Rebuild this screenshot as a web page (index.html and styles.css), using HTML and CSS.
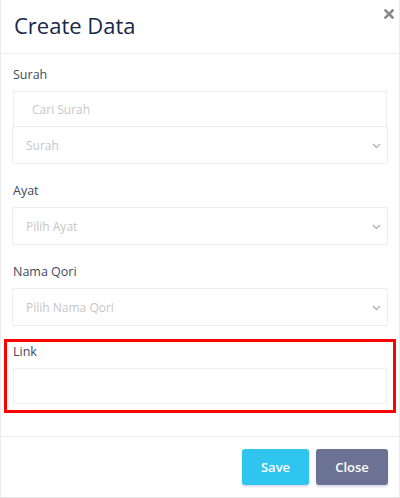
FILE: index.html
```html
<!DOCTYPE html>
<html lang="id">
<head>
<meta charset="utf-8">
<title>Create Data</title>
<link rel="stylesheet" href="styles.css">
</head>
<body>
<div class="modal">
  <div class="modal-header">
    <h5 class="modal-title">Create Data</h5>
    <button class="close" type="button" aria-label="Close">
      <svg width="10" height="10" viewBox="0 0 10 10"><path d="M1.5 1.5 L8.5 8.5 M8.5 1.5 L1.5 8.5" stroke="#8a8a8a" stroke-width="2.6" stroke-linecap="square"/></svg>
    </button>
  </div>
  <div class="modal-body">
    <div class="form-group">
      <label class="label">Surah</label>
      <input class="search" type="text" placeholder="Cari Surah">
      <div class="select"><span>Surah</span><svg class="chev" width="9" height="6" viewBox="0 0 9 6"><path d="M1 1 L4.5 4.5 L8 1" fill="none" stroke="#b5b5b5" stroke-width="1.5"/></svg></div>
    </div>
    <div class="form-group">
      <label class="label">Ayat</label>
      <div class="select"><span>Pilih Ayat</span><svg class="chev" width="9" height="6" viewBox="0 0 9 6"><path d="M1 1 L4.5 4.5 L8 1" fill="none" stroke="#b5b5b5" stroke-width="1.5"/></svg></div>
    </div>
    <div class="form-group">
      <label class="label">Nama Qori</label>
      <div class="select"><span>Pilih Nama Qori</span><svg class="chev" width="9" height="6" viewBox="0 0 9 6"><path d="M1 1 L4.5 4.5 L8 1" fill="none" stroke="#b5b5b5" stroke-width="1.5"/></svg></div>
    </div>
    <div class="highlight">
      <label class="label">Link</label>
      <input class="link" type="text">
    </div>
  </div>
  <div class="modal-footer">
    <button class="btn btn-save" type="button">Save</button>
    <button class="btn btn-close" type="button">Close</button>
  </div>
</div>
</body>
</html>
```
FILE: styles.css
```css
* { box-sizing: border-box; }
html, body { margin: 0; padding: 0; background: #fff; }
body { font-family: "Open Sans", "DejaVu Sans", sans-serif; }

.modal {
  width: 400px;
  height: 498px;
  border-left: 1px solid #ececec;
  border-right: 1px solid #ececec;
  border-bottom: 1px solid #e4e4e4;
  display: flex;
  flex-direction: column;
}

.modal-header {
  height: 54px;
  border-bottom: 1px solid #eceef2;
  display: flex;
  align-items: flex-start;
  justify-content: space-between;
  padding: 0 5px 0 13px;
}
.modal-title {
  margin: 10px 0 0 0;
  font-size: 22px;
  line-height: 30px;
  font-weight: 500;
  color: #172849;
}
.close {
  border: 0;
  background: none;
  padding: 0;
  margin-top: 9px;
  width: 10px;
  height: 10px;
  display: flex;
}

.modal-body {
  padding: 11px 11px 23px 11px;
  flex: 1;
}
.form-group {
  display: flex;
  flex-direction: column;
  margin-bottom: 17px;
}
.label {
  display: block;
  font-size: 12.5px;
  line-height: 20px;
  color: #3e4a5f;
  margin: 0 0 6px 1px;
}
.search {
  height: 35px;
  margin: 0 1px;
  border: 1px solid #edeef1;
  border-bottom: 0;
  padding: 0 0 0 18px;
  font-family: inherit;
  font-size: 12px;
  font-weight: 500;
  outline: none;
}
.search::placeholder { color: #c8c8c8; }
.select {
  height: 38px;
  border: 1px solid #ebedf0;
  border-radius: 2px;
  display: flex;
  align-items: center;
  justify-content: space-between;
  padding: 0 6px 0 13px;
  font-size: 12px;
  font-weight: 500;
  color: #c6c6c6;
}
.chev { margin-top: 1px; }

.highlight {
  margin: -4px -8px 0 -8px;
  border: 3px solid #ff0000;
  padding: 0 6px 6px 5px;
  display: flex;
  flex-direction: column;
}
.link {
  height: 36px;
  border: 1px solid #eeeff2;
  margin-left: 1px;
  outline: none;
  background: #fff;
}

.modal-footer {
  border-top: 1px solid #eceef2;
  padding: 12px 11px 12px 11px;
  display: flex;
  justify-content: flex-end;
  gap: 7px;
}
.btn {
  height: 36px;
  border: 0;
  border-radius: 3px;
  color: #fff;
  font-family: inherit;
  font-size: 13px;
  font-weight: 600;
  padding: 0;
  box-shadow: 0 2px 2px rgba(120, 110, 180, 0.25);
}
.btn-save { width: 67px; background: #2fc5ee; }
.btn-close { width: 72px; background: #6c7293; }
```
